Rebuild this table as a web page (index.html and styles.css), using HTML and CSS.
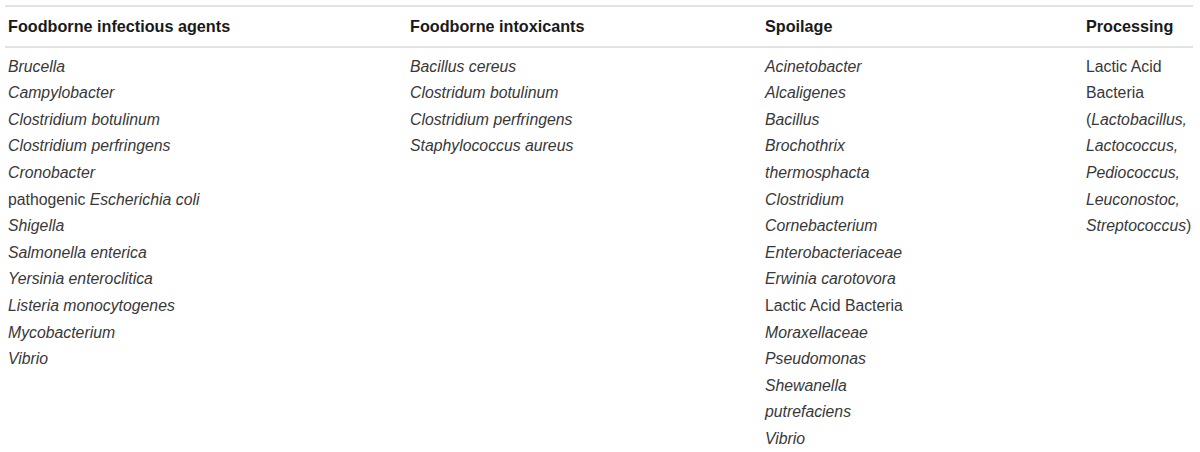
FILE: index.html
```html
<!DOCTYPE html>
<html>
<head>
<meta charset="utf-8">
<link rel="stylesheet" href="styles.css">
</head>
<body>
<table class="tbl">
  <colgroup>
    <col class="c1"><col class="c2"><col class="c3"><col class="c4">
  </colgroup>
  <thead>
    <tr>
      <th>Foodborne infectious agents</th>
      <th>Foodborne intoxicants</th>
      <th>Spoilage</th>
      <th>Processing</th>
    </tr>
  </thead>
  <tbody>
    <tr>
      <td>
        <div class="ln"><i>Brucella</i></div>
        <div class="ln"><i>Campylobacter</i></div>
        <div class="ln"><i>Clostridium botulinum</i></div>
        <div class="ln"><i>Clostridium perfringens</i></div>
        <div class="ln"><i>Cronobacter</i></div>
        <div class="ln">pathogenic <i>Escherichia coli</i></div>
        <div class="ln"><i>Shigella</i></div>
        <div class="ln"><i>Salmonella enterica</i></div>
        <div class="ln"><i>Yersinia enteroclitica</i></div>
        <div class="ln"><i>Listeria monocytogenes</i></div>
        <div class="ln"><i>Mycobacterium</i></div>
        <div class="ln"><i>Vibrio</i></div>
      </td>
      <td>
        <div class="ln"><i>Bacillus cereus</i></div>
        <div class="ln"><i>Clostridum botulinum</i></div>
        <div class="ln"><i>Clostridium perfringens</i></div>
        <div class="ln"><i>Staphylococcus aureus</i></div>
      </td>
      <td>
        <div class="ln"><i>Acinetobacter</i></div>
        <div class="ln"><i>Alcaligenes</i></div>
        <div class="ln"><i>Bacillus</i></div>
        <div class="ln"><i>Brochothrix</i></div>
        <div class="ln"><i>thermosphacta</i></div>
        <div class="ln"><i>Clostridium</i></div>
        <div class="ln"><i>Cornebacterium</i></div>
        <div class="ln"><i>Enterobacteriaceae</i></div>
        <div class="ln"><i>Erwinia carotovora</i></div>
        <div class="ln">Lactic Acid Bacteria</div>
        <div class="ln"><i>Moraxellaceae</i></div>
        <div class="ln"><i>Pseudomonas</i></div>
        <div class="ln"><i>Shewanella</i></div>
        <div class="ln"><i>putrefaciens</i></div>
        <div class="ln"><i>Vibrio</i></div>
      </td>
      <td>
        <div class="ln">Lactic Acid</div>
        <div class="ln">Bacteria</div>
        <div class="ln">(<i>Lactobacillus,</i></div>
        <div class="ln"><i>Lactococcus,</i></div>
        <div class="ln"><i>Pediococcus,</i></div>
        <div class="ln"><i>Leuconostoc,</i></div>
        <div class="ln"><i>Streptococcus</i>)</div>
      </td>
    </tr>
  </tbody>
</table>
</body>
</html>
```

FILE: styles.css
```css
html, body {
  margin: 0;
  padding: 0;
  background: #ffffff;
}
body {
  font-family: "Liberation Sans", Arial, Helvetica, sans-serif;
  font-size: 15.8px;
  color: #383838;
}
.tbl {
  margin: 5px 0 0 5px;
  width: 1188px;
  border-collapse: collapse;
  table-layout: fixed;
}
.c1 { width: 402px; }
.c2 { width: 355px; }
.c3 { width: 321px; }
.c4 { width: 110px; }
.tbl th {
  text-align: left;
  font-weight: bold;
  font-size: 16.2px;
  color: #1a1a1a;
  padding: 6px 3px;
  line-height: 26.6px;
  border-top: 2px solid #e2e2e2;
  border-bottom: 2px solid #e2e2e2;
}
.tbl td {
  vertical-align: top;
  padding: 6px 3px;
}
.ln {
  line-height: 26.6px;
  white-space: nowrap;
}
```
